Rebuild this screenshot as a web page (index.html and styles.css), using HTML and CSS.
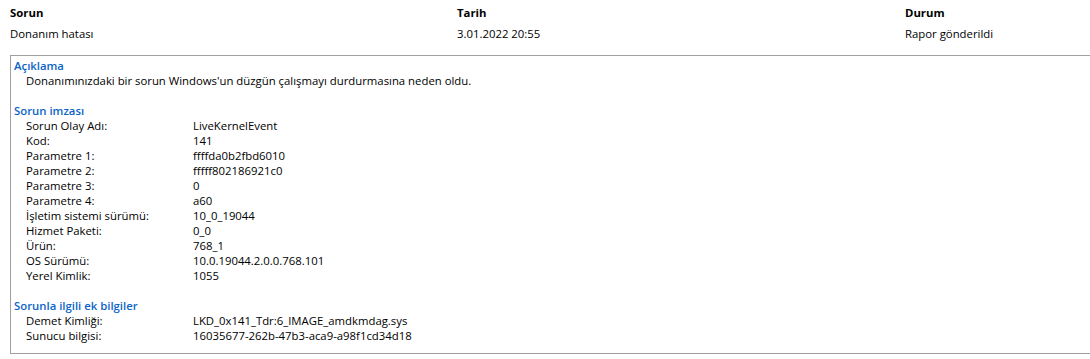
FILE: index.html
```html
<!DOCTYPE html>
<html lang="tr">
<head>
    <meta charset="UTF-8" />
    <title>Sorun raporu</title>
    <link rel="stylesheet" href="styles.css">
</head>
<body>
<div class="report">
    <div class="summary">
        <div class="head">Sorun</div>
        <div class="head">Tarih</div>
        <div class="head">Durum</div>
        <div>Donanım hatası</div>
        <div>3.01.2022 20:55</div>
        <div>Rapor gönderildi</div>
    </div>

    <div class="details">
        <div class="section">Açıklama</div>
        <div class="desc">Donanımınızdaki bir sorun Windows'un düzgün çalışmayı durdurmasına neden oldu.</div>

        <div class="section gap">Sorun imzası</div>
        <div class="rows">
            <div>Sorun Olay Adı:</div><div>LiveKernelEvent</div>
            <div>Kod:</div><div>141</div>
            <div>Parametre 1:</div><div>ffffda0b2fbd6010</div>
            <div>Parametre 2:</div><div>fffff802186921c0</div>
            <div>Parametre 3:</div><div>0</div>
            <div>Parametre 4:</div><div>a60</div>
            <div>İşletim sistemi sürümü:</div><div>10_0_19044</div>
            <div>Hizmet Paketi:</div><div>0_0</div>
            <div>Ürün:</div><div>768_1</div>
            <div>OS Sürümü:</div><div>10.0.19044.2.0.0.768.101</div>
            <div>Yerel Kimlik:</div><div>1055</div>
        </div>

        <div class="section gap">Sorunla ilgili ek bilgiler</div>
        <div class="rows">
            <div>Demet Kimliği:</div><div>LKD_0x141_Tdr:6_IMAGE_amdkmdag.sys</div>
            <div>Sunucu bilgisi:</div><div>16035677-262b-47b3-aca9-a98f1cd34d18</div>
        </div>
    </div>
</div>
</body>
</html>
```

FILE: styles.css
```css
body {
    margin: 0;
    background: #ffffff;
    color: #000000;
    font-family: "Open Sans", "Noto Sans", sans-serif;
    font-size: 11.35px;
}
.report {
    padding: 5px 0 0 10px;
}
.summary {
    display: grid;
    grid-template-columns: 447px 448px 1fr;
    row-gap: 6px;
    line-height: 15px;
}
.summary .head {
    font-weight: bold;
}
.details {
    margin-top: 14px;
    border: 1px solid #a0a0a0;
    border-right: none;
    padding: 2px 0 10px 3px;
    line-height: 15px;
}
.section {
    color: #0a64c8;
    font-weight: 600;
}
.section.gap {
    margin-top: 15px;
}
.desc {
    padding-left: 12px;
}
.rows {
    display: grid;
    grid-template-columns: 167px 1fr;
    padding-left: 12px;
}
```
